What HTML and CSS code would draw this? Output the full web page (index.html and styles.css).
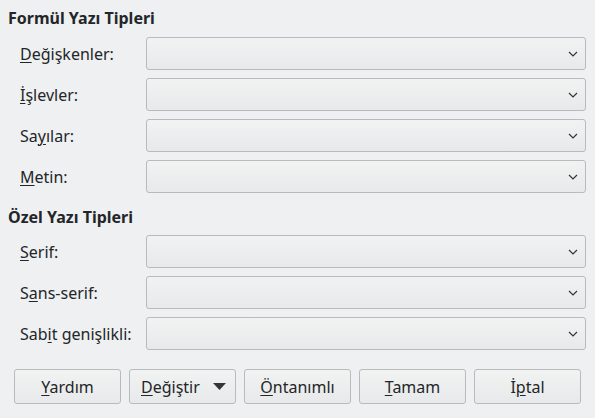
FILE: index.html
```html
<!DOCTYPE html>
<html lang="tr">
<head>
<meta charset="utf-8">
<link rel="stylesheet" href="styles.css">
</head>
<body>
<div class="dialog">
  <h2 class="heading first">Formül Yazı Tipleri</h2>
  <div class="grid">
    <label class="label"><span><u>D</u>eğişkenler:</span></label>
    <div class="combo"><svg class="chev" width="10" height="6" viewBox="0 0 10 6"><polyline points="1,1 5,5 9,1" /></svg></div>
    <label class="label"><span><u>İ</u>şlevler:</span></label>
    <div class="combo"><svg class="chev" width="10" height="6" viewBox="0 0 10 6"><polyline points="1,1 5,5 9,1" /></svg></div>
    <label class="label"><span>Sa<u>y</u>ılar:</span></label>
    <div class="combo"><svg class="chev" width="10" height="6" viewBox="0 0 10 6"><polyline points="1,1 5,5 9,1" /></svg></div>
    <label class="label"><span><u>M</u>etin:</span></label>
    <div class="combo"><svg class="chev" width="10" height="6" viewBox="0 0 10 6"><polyline points="1,1 5,5 9,1" /></svg></div>
  </div>
  <h2 class="heading second">Özel Yazı Tipleri</h2>
  <div class="grid">
    <label class="label"><span><u>S</u>erif:</span></label>
    <div class="combo"><svg class="chev" width="10" height="6" viewBox="0 0 10 6"><polyline points="1,1 5,5 9,1" /></svg></div>
    <label class="label"><span>S<u>a</u>ns-serif:</span></label>
    <div class="combo"><svg class="chev" width="10" height="6" viewBox="0 0 10 6"><polyline points="1,1 5,5 9,1" /></svg></div>
    <label class="label"><span>Sab<u>i</u>t genişlikli:</span></label>
    <div class="combo"><svg class="chev" width="10" height="6" viewBox="0 0 10 6"><polyline points="1,1 5,5 9,1" /></svg></div>
  </div>
  <div class="buttons">
    <button class="btn"><span><u>Y</u>ardım</span></button>
    <button class="btn split"><span><u>D</u>eğiştir</span><svg class="tri" width="13" height="7" viewBox="0 0 13 7"><polygon points="0,0 13,0 6.5,7" /></svg></button>
    <button class="btn"><span><u>Ö</u>ntanımlı</span></button>
    <button class="btn"><span><u>T</u>amam</span></button>
    <button class="btn"><span>İ<u>p</u>tal</span></button>
  </div>
</div>
</body>
</html>
```

FILE: styles.css
```css
* { box-sizing: border-box; }
html, body {
  margin: 0;
  padding: 0;
  background: #eff0f1;
}
body {
  width: 595px;
  height: 418px;
  overflow: hidden;
  font-family: "Noto Sans", "DejaVu Sans", sans-serif;
  font-size: 16px;
  color: #232629;
}
.dialog {
  padding: 7px 9px 0 8px;
}
.heading {
  margin: 0;
  font-size: 16px;
  font-weight: bold;
  line-height: 22px;
  color: #232629;
}
.heading.first { margin-bottom: 8px; }
.heading.second { margin-top: 13px; margin-bottom: 7px; }
.grid {
  display: grid;
  grid-template-columns: 126px 1fr;
  row-gap: 8px;
  padding-left: 12px;
}
.label {
  display: flex;
  align-items: center;
  height: 33px;
  line-height: 22px;
  white-space: nowrap;
}
u {
  text-decoration: underline;
  text-underline-offset: 2px;
  text-decoration-thickness: 1px;
}
.combo {
  height: 33px;
  border: 1px solid #b9babb;
  border-radius: 3px;
  background: linear-gradient(#f1f2f2, #e8e9ea);
  display: flex;
  align-items: center;
  justify-content: flex-end;
  padding-right: 7px;
}
.chev polyline {
  fill: none;
  stroke: #31363b;
  stroke-width: 1.2;
}
.buttons {
  display: flex;
  gap: 8px;
  margin-top: 19px;
  padding-left: 6px;
}
.btn {
  width: 107px;
  height: 35px;
  border: 1px solid #b9babb;
  border-radius: 3px;
  background: linear-gradient(#f1f2f2, #e8e9ea);
  font-family: inherit;
  font-size: 16px;
  color: #232629;
  padding: 0;
  display: flex;
  align-items: center;
  justify-content: center;
  white-space: nowrap;
}
.btn.split {
  justify-content: space-between;
  padding: 0 9px 0 11px;
}
.tri polygon { fill: #31363b; }
```
